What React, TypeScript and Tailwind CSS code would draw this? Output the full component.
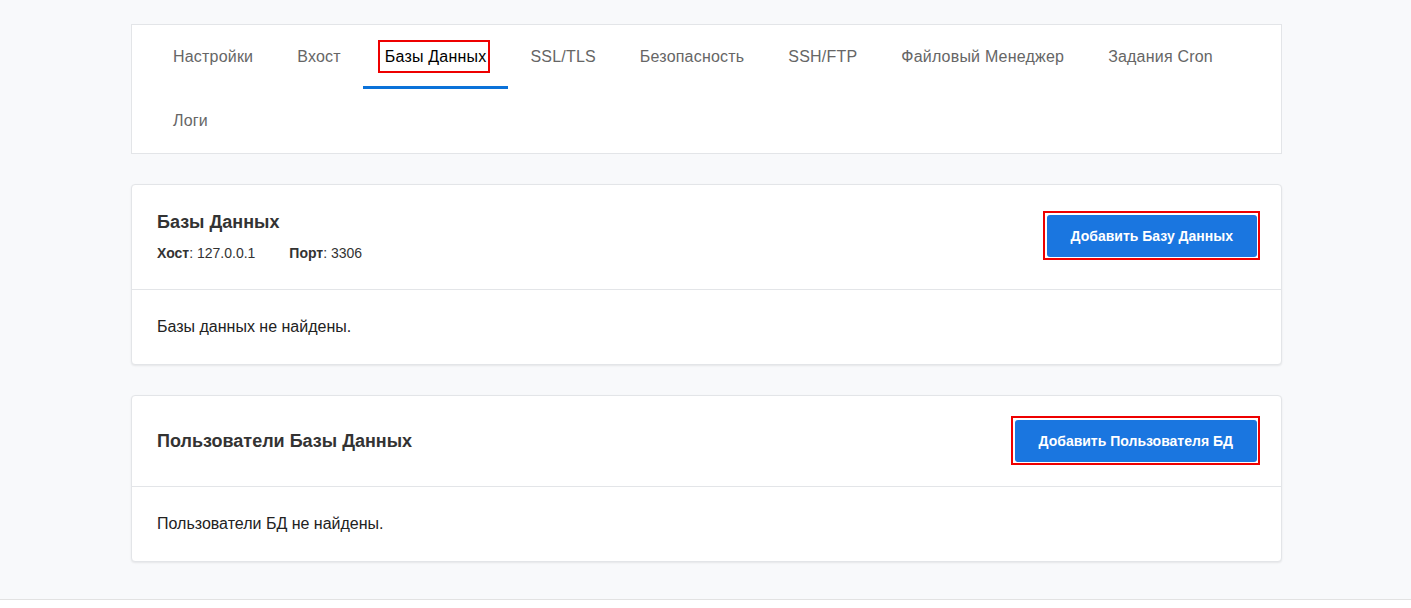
import React from 'react';

const tabs = ['Настройки', 'Вхост', 'Базы Данных', 'SSL/TLS', 'Безопасность', 'SSH/FTP', 'Файловый Менеджер', 'Задания Cron', 'Логи'];

// red highlight frame drawn over an element, doesn't affect layout
const Highlight = ({ className }: { className: string }) => (
  <span className={'absolute border-2 border-[#ee0000] pointer-events-none ' + className} />
);

const Card = ({ children, body, head = 'py-6' }: { children: React.ReactNode; body: string; head?: string }) => (
  <div className="bg-white border border-[#e3e5e8] rounded-[4px] shadow-[0_1px_2px_rgba(0,0,0,0.08)]">
    <div className={'flex items-center justify-between pl-[25px] pr-6 border-b border-[#e3e5e8] ' + head}>{children}</div>
    <div className="pl-[25px] pr-6 h-[74px] flex items-center text-[16px] text-[#222]">{body}</div>
  </div>
);

const Button = ({ label }: { label: string }) => (
  <div className="relative">
    <button className="h-[42px] px-6 rounded-[3px] bg-[#1a76e0] text-white text-[14px] font-bold">{label}</button>
    <Highlight className="-top-1 -left-1 -right-[3px] -bottom-[3px]" />
  </div>
);

export default function App() {
  return (
    <div className="font-['Liberation_Sans',Arial,sans-serif]">
      <div className="h-[600px] bg-[#f8f9fb] border-b border-[#e2e2e2] pt-6">
        <div className="w-[1151px] ml-[131px] flex flex-col gap-[30px]">
          <div className="bg-white border border-[#e3e5e8] pl-[19px] pr-5 flex flex-wrap">
            {tabs.map((t) => {
              const active = t === 'Базы Данных';
              return (
                <div
                  key={t}
                  className={
                    'h-16 px-[22px] flex items-center text-[16px] leading-6 border-b-[3px] pt-[3px] ' +
                    (active ? 'border-[#0b72d9] text-black' : 'border-transparent text-[#666]')
                  }
                >
                  <span className="relative tracking-[0.2px]">
                    {t}
                    {active && <Highlight className="-top-[5px] -bottom-[4px] -left-[7px] -right-[4px]" />}
                  </span>
                </div>
              );
            })}
          </div>

          <Card body="Базы данных не найдены." head="pt-6 pb-[26px]">
            <div className="text-[#333]">
              <div className="text-[18px] font-bold leading-[27px]">Базы Данных</div>
              <div className="mt-[7px] text-[14px] flex gap-[34px] leading-5">
                <span>
                  <b>Хост</b>: 127.0.0.1
                </span>
                <span>
                  <b>Порт</b>: 3306
                </span>
              </div>
            </div>
            <Button label="Добавить Базу Данных" />
          </Card>

          <Card body="Пользователи БД не найдены.">
            <div className="text-[18px] font-bold text-[#333]">Пользователи Базы Данных</div>
            <Button label="Добавить Пользователя БД" />
          </Card>
        </div>
      </div>
    </div>
  );
}
